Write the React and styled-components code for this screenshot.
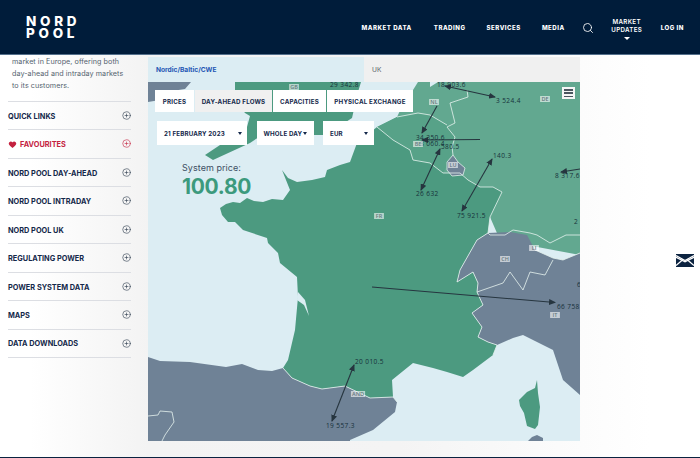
import React from 'react';
import styled, { createGlobalStyle } from 'styled-components';
import { CirclePlus, Heart, Search } from 'lucide-react';

const GlobalStyle = createGlobalStyle`
  html, body { margin: 0; padding: 0; height: 100%; overflow: hidden; }
  body { font-family: Inter, "Liberation Sans", sans-serif; color: #14284a; background: #fff; }
  #root { height: 100%; }
`;

const Page = styled.div`
  height: 458px;
  display: flex;
  flex-direction: column;
  border-bottom: 1px solid #0a2340;
  box-sizing: border-box;
`;

const Header = styled.header`
  height: 55px;
  flex: none;
  background: #001c3a;
  border-bottom: 1px solid #54708c;
  box-sizing: border-box;
  display: flex;
  align-items: center;
  padding: 0 16px 0 26px;
  color: #fff;
`;

const Logo = styled.div`
  font-size: 13.5px;
  line-height: 11.5px;
  font-weight: 800;
  letter-spacing: 3.7px;
  margin-top: 1px;
`;

const Nav = styled.nav`
  margin-left: auto;
  display: flex;
  align-items: center;
`;

const NavLink = styled.a`
  font-size: 6.1px;
  font-weight: 800;
  letter-spacing: 0.5px;
  white-space: nowrap;
  margin-left: ${(p) => p.$gap}px;
`;

const SearchBtn = styled.span`
  display: flex;
  margin-left: 17px;
  margin-top: 1px;
`;

const Updates = styled.div`
  margin-left: 16px;
  width: 34px;
  display: flex;
  flex-direction: column;
  align-items: center;
  font-size: 6.2px;
  font-weight: 600;
  line-height: 8px;
  letter-spacing: 0.3px;
  text-align: center;
  margin-top: 4px;
  &::after {
    content: "";
    margin-top: 3px;
    border: 3px solid transparent;
    border-top: 3px solid #fff;
    border-bottom: 0;
  }
`;

const Main = styled.main`
  flex: 1;
  min-height: 0;
  display: flex;
  background: linear-gradient(90deg, #fff 0, #fff 30px, #f3f3f3 148px, #f4f4f4 400px, #fff 650px);
`;

const Sidebar = styled.aside`
  width: 148px;
  flex: none;
  box-sizing: border-box;
  padding: 0 17px 0 8px;
  overflow: hidden;
`;

const Intro = styled.p`
  margin: 1px 0 8px 4px;
  font-size: 7.2px;
  line-height: 12.2px;
  letter-spacing: 0.05px;
  color: #55636f;
  white-space: nowrap;
`;

const MenuRow = styled.div`
  height: 28.5px;
  box-sizing: border-box;
  border-top: 1px solid #dcdee3;
  display: flex;
  align-items: center;
  justify-content: space-between;
  font-size: 7.35px;
  font-weight: 700;
  color: ${(p) => (p.$accent ? '#c4223f' : '#14284a')};
  &:last-child { border-bottom: 1px solid #dcdee3; height: 29px; }
  svg { flex: none; }
`;

const RowLabel = styled.span`
  display: flex;
  align-items: center;
  gap: 3px;
  margin-top: 1.5px;
  white-space: nowrap;
`;

const MapColumn = styled.section`
  width: 432px;
  flex: none;
  padding-top: 2px;
`;

const RegionTabs = styled.div`
  display: flex;
  height: 25px;
`;

const RegionTab = styled.div`
  width: ${(p) => p.$w}px;
  box-sizing: border-box;
  padding-left: ${(p) => p.$pad}px;
  display: flex;
  align-items: center;
  font-size: 6.6px;
  background: ${(p) => (p.$active ? '#dcedf3' : '#f0f0f0')};
  color: ${(p) => (p.$active ? '#1f56b3' : '#555f68')};
  font-weight: ${(p) => (p.$active ? 700 : 400)};
`;

const MapPanel = styled.div`
  position: relative;
  height: 359px;
  overflow: hidden;
`;

const MapSvg = styled.svg`
  display: block;
  width: 432px;
  height: 359px;
`;

const Controls = styled.div`
  position: absolute;
  top: 8px;
  left: 7px;
  display: flex;
  flex-direction: column;
  gap: 9px;
`;

const ViewTabs = styled.div`
  display: flex;
  gap: 1px;
`;

const ViewTab = styled.div`
  height: 22px;
  width: ${(p) => p.$w}px;
  background: ${(p) => (p.$active ? '#f0f0f0' : '#fff')};
  display: flex;
  align-items: center;
  justify-content: center;
  font-size: 6.2px;
  font-weight: 700;
  letter-spacing: 0.2px;
  color: #14284a;
  white-space: nowrap;
`;

const Selects = styled.div`
  display: flex;
  gap: 9.5px;
  padding-left: 2px;
`;

const Select = styled.div`
  height: 24px;
  width: ${(p) => p.$w}px;
  box-sizing: border-box;
  padding: 0 ${(p) => p.$right}px 0 7px;
  background: #fff;
  display: flex;
  align-items: center;
  justify-content: space-between;
  font-size: 6.2px;
  font-weight: 700;
  letter-spacing: 0.15px;
  white-space: nowrap;
  &::after {
    content: "";
    border: 2.5px solid transparent;
    border-top: 3px solid #14284a;
    border-bottom: 0;
  }
`;

const PriceBox = styled.div`
  position: absolute;
  top: 80px;
  left: 34px;
`;

const PriceLabel = styled.div`
  font-size: 9px;
  line-height: 12px;
  letter-spacing: 0.05px;
  color: #3d4f63;
`;

const PriceValue = styled.div`
  font-size: 21px;
  line-height: 25px;
  font-weight: 700;
  color: #3c9a7d;
  letter-spacing: -0.3px;
`;

const BurgerBtn = styled.div`
  position: absolute;
  top: 5px;
  right: 5px;
  width: 13px;
  height: 12px;
  box-sizing: border-box;
  padding: 2px;
  background: #f4f6f6;
  display: flex;
  flex-direction: column;
  justify-content: space-between;
`;

const BurgerLine = styled.span`
  height: 1.5px;
  background: #4b5660;
`;

const RightRail = styled.div`
  flex: 1;
  display: flex;
  justify-content: flex-end;
  align-items: flex-start;
  padding: 199px 6px 0 0;
`;

const MENU = ['Nord Pool Day-ahead', 'Nord Pool Intraday', 'Nord Pool UK', 'Regulating Power', 'Power System Data', 'Maps', 'Data Downloads'];

const numbers = [
  ['29 342.8', 330, 87], ['18 903.6', 437, 87], ['3 524.4', 496, 103], ['34 350.6', 416, 139.5],
  ['8 060.4', 420, 146], ['580.5', 441, 149], ['140.3', 493, 158], ['8 317.6', 555, 178],
  ['26 632', 416, 196], ['75 921.5', 457, 218], ['2 ', 574, 224], ['6', 577, 287],
  ['66 758', 557, 309], ['20 010.5', 355, 364], ['19 557.3', 326, 428],
];

const codes = [
  ['GB', 294, 87], ['NL', 434, 102], ['DE', 545, 99], ['BE', 418, 144], ['LU', 453, 165],
  ['FR', 379, 216], ['CH', 505, 259], ['LI', 534, 248], ['IT', 555, 315], ['AND', 358, 394],
];

const arrows = [
  [445, 86, 495, 97, true], [437, 106, 422, 133, false], [480, 139.5, 422, 140, false],
  [440, 149, 421, 190, true], [492, 159, 462, 211, true], [580, 169, 561, 172, false],
  [372, 287, 555, 302.5, false], [354, 365, 332, 421, true],
];

const FranceMap = () => (
  <MapSvg viewBox="148 82 432 359">
    <defs>
      <marker id="head" markerWidth="7" markerHeight="6" refX="6" refY="3" orient="auto-start-reverse" markerUnits="userSpaceOnUse">
        <path d="M0 0 L7 3 L0 6 Z" fill="#26353f" />
      </marker>
    </defs>
    <rect x="148" y="82" width="432" height="359" fill="#dcedf3" />
    {/* UK */}
    <path d="M148 82H191L185 89L172 91L160 100L148 102Z" fill="#6f8296" />
    <path d="M235 82H361L358 92L352 118L326 135H262L250 143L213 160L205 155L247 127L250 116L245 113L235 100Z" fill="#4c9a80" />
    {/* land to the north east */}
    <path d="M377 127L397 117L405 100L413 90L418 82H430V87L438 82H580V255L500 240L490 217L440 200L400 150Z" fill="#62a890" />
    {/* France */}
    <path d="M282 170L288 178L297 182L312 180L325 177L327 170L340 165L350 162L357 143L377 127L393 140L410 150L413 160L430 163L443 173L460 173L468 180L480 187L493 187L502 192L490 217L488 233L477 240L460 270L457 282L473 272L478 283L477 292L483 305L472 313L482 327L478 337L488 342L497 345L493 355L473 370L463 377L447 372L433 368L413 363L392 380L393 397L370 398L345 386L322 389L310 386L292 378L283 368L288 360L295 330L298 297L297 277L280 263L278 253L268 243L267 238L243 230L235 222L228 222L222 215L220 208L226 204L233 202L240 203L247 198L254 201L263 202L272 199L283 200L290 190Z" fill="#4c9a80" />
    <path d="M377 127L397 117L418 113L430 115L447 125L455 137L452 147L453 155L443 173L430 163L413 160L410 150L393 140Z" fill="#57a288" />
    {/* Gironde */}
    <path d="M298 292L305 300L309 316L304 305L297 300Z" fill="#dcedf3" />
    {/* Spain */}
    <path d="M148 357L160 361L190 362L226 367L242 364L258 370L272 371L283 368L292 378L310 386L322 389L345 386L370 398L393 397L397 402L395 412L373 430L350 440V441H148Z" fill="#6f8296" />
    {/* Switzerland and Italy */}
    <path d="M488 233L510 232L527 235L535 250L553 258L563 260L580 253V395L563 380L553 350L523 335L513 338L497 345L488 342L478 337L482 327L472 313L483 305L477 292L478 283L473 272L457 282L460 270L477 240Z" fill="#6f8296" />
    {/* Luxembourg */}
    <path d="M453 155L458 162L465 168L463 175L452 176L447 170L447 162Z" fill="#6f8296" stroke="#dff0ea" strokeWidth="0.8" />
    {/* Corsica, Sardinia */}
    <path d="M537 380L538 393L540 407L538 425L535 429L527 426L524 413L520 406L519 400L527 392L535 388Z" fill="#4c9a80" />
    <path d="M528 441L532 437L537 435L543 438V441Z" fill="#6f8296" />
    {/* borders */}
    <g fill="none" stroke="#e6f3ef" strokeWidth="0.8">
      <path d="M377 127L393 140L410 150L413 160L430 163L443 173L460 173L468 180L480 187L493 187L502 192L490 217L488 233L477 240L460 270L457 282L473 272L478 283L477 292L483 305L472 313L482 327L478 337L488 342L497 345L493 355" />
      <path d="M477 292L503 283L510 272L523 290L530 272L545 275L553 260" />
      <path d="M488 233L490 235L505 235L513 230L530 233L537 235L550 243L566 235L580 235" />
      <path d="M535 250L553 258L563 260L580 253" />
      <path d="M467 90L468 97L450 103L455 123L447 127L455 137L452 147L453 155" />
      <path d="M397 117L418 113L430 115L447 125" />
      <path d="M283 368L292 378L310 386L322 389L345 386L370 398L393 397L397 402" />
      <path d="M148 416L158 415L160 411L172 412L174 422L165 435L162 441" />
    </g>
    {arrows.map(([x1, y1, x2, y2, both]) => (
      <line key={`${x1}-${y1}`} x1={x1} y1={y1} x2={x2} y2={y2} stroke="#26353f" strokeWidth="1.1" markerEnd="url(#head)" markerStart={both ? 'url(#head)' : undefined} />
    ))}
    {numbers.map(([t, x, y]) => (
      <text key={t} x={x} y={y} fontFamily="'Open Sans', sans-serif" fontSize="6.5" letterSpacing="0.4" fill="#16303a">{t}</text>
    ))}
    {codes.map(([t, x, y]) => (
      <g key={t}>
        <rect x={x - t.length * 2.2 - 0.5} y={y - 3} width={t.length * 4.4 + 1} height="6" fill="#fff" opacity="0.6" />
        <text x={x} y={y + 2} textAnchor="middle" fontFamily="'Open Sans', sans-serif" fontSize="5.5" fontWeight="600" fill="#66787f">{t}</text>
      </g>
    ))}
  </MapSvg>
);

const Envelope = () => (
  <svg width="18" height="13" viewBox="0 0 18 13">
    <rect width="18" height="13" fill="#0c2340" />
    <path d="M0 1.5L9 6.5L18 1.5M0 11.5L7 5.5M18 11.5L11 5.5" fill="none" stroke="#fff" strokeWidth="1.3" />
    <path d="M0 2.5L9 7L18 2.5L18 4L9 8.5L0 4Z" fill="#fff" />
  </svg>
);

const PlusIcon = ({ color = '#2b3a4e' }) => <CirclePlus size={9} strokeWidth={1.6} color={color} />;

const App = () => (
  <Page>
    <GlobalStyle />
    <Header>
      <Logo>NORD<br />POOL</Logo>
      <Nav>
        <NavLink $gap={0}>MARKET DATA</NavLink>
        <NavLink $gap={22}>TRADING</NavLink>
        <NavLink $gap={21}>SERVICES</NavLink>
        <NavLink $gap={21}>MEDIA</NavLink>
        <SearchBtn><Search size={12} strokeWidth={1.7} /></SearchBtn>
        <Updates>MARKET UPDATES</Updates>
        <NavLink $gap={17}>LOG IN</NavLink>
      </Nav>
    </Header>
    <Main>
      <Sidebar>
        <Intro>market in Europe, offering both<br />day-ahead and intraday markets<br />to its customers.</Intro>
        <MenuRow><RowLabel>QUICK LINKS</RowLabel><PlusIcon /></MenuRow>
        <MenuRow $accent>
          <RowLabel><Heart size={9} fill="#c4223f" strokeWidth={0} />FAVOURITES</RowLabel>
          <PlusIcon color="#c4223f" />
        </MenuRow>
        {MENU.map((item) => (
          <MenuRow key={item}><RowLabel>{item.toUpperCase()}</RowLabel><PlusIcon /></MenuRow>
        ))}
      </Sidebar>
      <MapColumn>
        <RegionTabs>
          <RegionTab $active $w={216} $pad={8}>Nordic/Baltic/CWE</RegionTab>
          <RegionTab $w={216} $pad={8}>UK</RegionTab>
        </RegionTabs>
        <MapPanel>
          <FranceMap />
          <Controls>
            <ViewTabs>
              <ViewTab $w={39}>PRICES</ViewTab>
              <ViewTab $w={77} $active>DAY-AHEAD FLOWS</ViewTab>
              <ViewTab $w={53}>CAPACITIES</ViewTab>
              <ViewTab $w={86}>PHYSICAL EXCHANGE</ViewTab>
            </ViewTabs>
            <Selects>
              <Select $w={90} $right={5}>21 FEBRUARY 2023</Select>
              <Select $w={57} $right={7}>WHOLE DAY</Select>
              <Select $w={51} $right={6}>EUR</Select>
            </Selects>
          </Controls>
          <PriceBox>
            <PriceLabel>System price:</PriceLabel>
            <PriceValue>100.80</PriceValue>
          </PriceBox>
          <BurgerBtn><BurgerLine /><BurgerLine /><BurgerLine /></BurgerBtn>
        </MapPanel>
      </MapColumn>
      <RightRail><Envelope /></RightRail>
    </Main>
  </Page>
);

export default App;
